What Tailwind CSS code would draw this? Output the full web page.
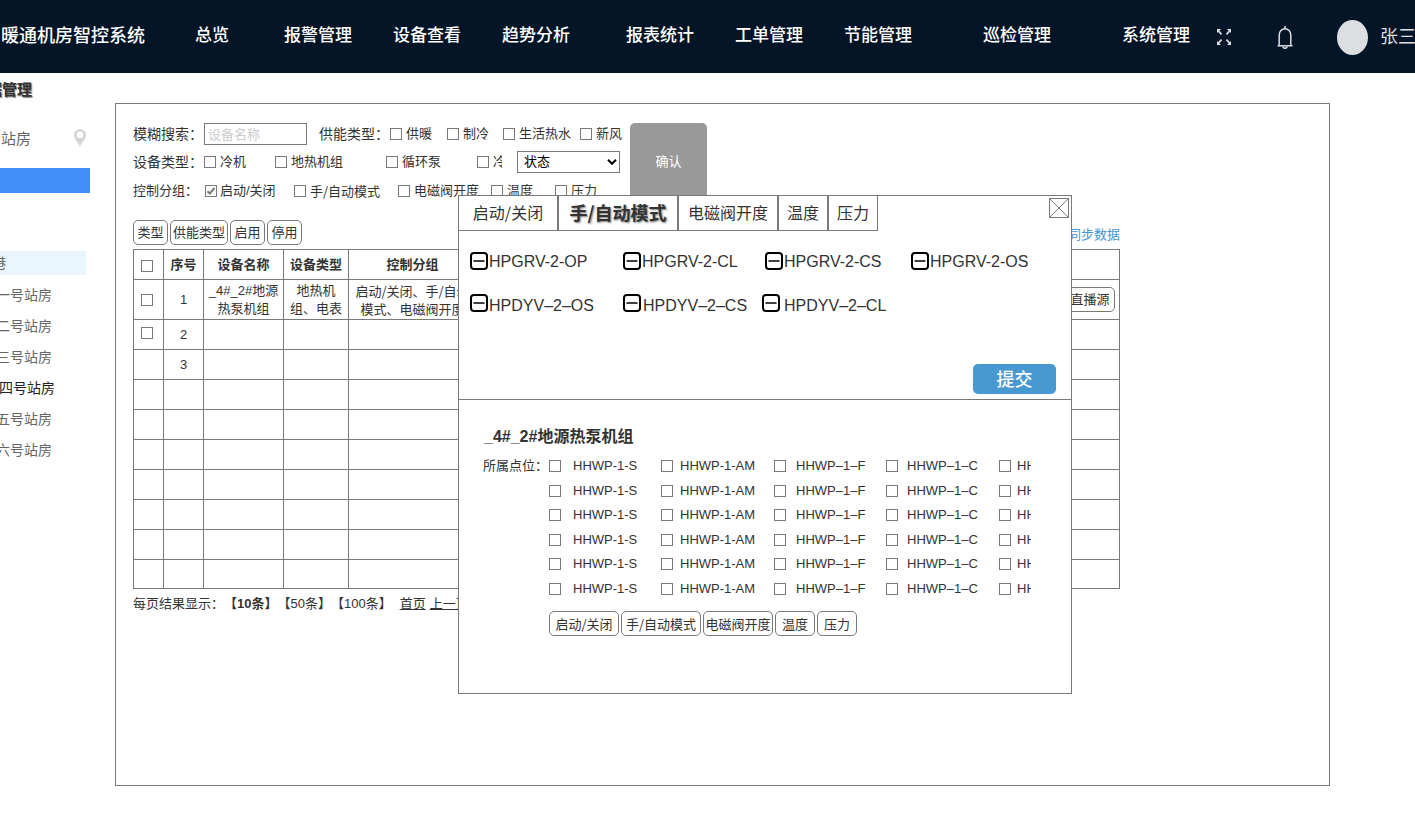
<!DOCTYPE html>
<html lang="zh-CN">
<head>
<meta charset="utf-8">
<meta name="viewport" content="width=device-width, initial-scale=1">
<title>暖通机房智控系统</title>
<script src="https://cdn.jsdelivr.net/npm/@tailwindcss/browser@4"></script>
</head>
<body class="relative min-h-screen overflow-x-hidden bg-white font-['Liberation_Sans','Noto_Sans_CJK_SC',sans-serif] text-[13px] leading-[18px] text-[#333333] [text-spacing-trim:space-all]">

<header class="flex h-[73px] items-center overflow-hidden bg-[#041527] pb-0.5 whitespace-nowrap text-white">
  <h1 class="mr-[50px] w-[145px] shrink-0 pl-px text-lg font-medium">暖通机房智控系统</h1>
  <nav class="flex shrink-0 text-[17px] leading-6 font-medium" aria-label="主导航">
    <a href="#" class="mr-[55px]">总览</a>
    <a href="#" class="mr-[41px]">报警管理</a>
    <a href="#" class="mr-[41px]">设备查看</a>
    <a href="#" class="mr-[56px]">趋势分析</a>
    <a href="#" class="mr-[41px]">报表统计</a>
    <a href="#" class="mr-[41px]">工单管理</a>
    <a href="#" class="mr-[71px]">节能管理</a>
    <a href="#" class="mr-[71px]">巡检管理</a>
    <a href="#" class="mr-[26px]">系统管理</a>
  </nav>
  <div class="flex shrink-0 items-center pt-[3px]">
    <button type="button" aria-label="全屏" class="mr-[45px]">
      <svg class="h-[18px] w-4" viewBox="0 0 16 18" fill="none" stroke="#dcdee2" stroke-width="1.800"><path d="M2 2.500l3.500 3.800M14 2.500l-3.500 3.800M2 15.500l3.500-3.800M14 15.500l-3.500-3.800"/><path fill="#dcdee2" stroke="none" d="M1 1h4L1 5zM15 1h-4l4 4zM1 17h4l-4-4zM15 17h-4l4-4z"/></svg>
    </button>
    <button type="button" aria-label="通知" class="mr-[44px]">
      <svg class="h-[23px] w-4" viewBox="0 0 16 23" fill="none" stroke="#dcdee2" stroke-width="1.500"><path d="M8 0v3"/><path d="M2.200 19.500V9a5.800 6.300 0 0 1 11.600 0v10.500"/><path d="M.5 19.800h15"/><path d="M6 20.500a2 1.700 0 0 0 4 0"/></svg>
    </button>
    <span class="mr-3 h-[35px] w-[31px] rounded-[50%] bg-[#dcdee2]"></span>
    <span class="text-lg text-[#dcdee2]">张三</span>
  </div>
</header>

<div class="flex">
  <aside class="w-[115px] shrink-0 overflow-hidden whitespace-nowrap text-sm text-[#666666]">
    <h2 class="-ml-[13px] mt-1.5 text-[15px] font-bold text-[#333333] [text-shadow:1px_1px_1px_#777777]">据管理</h2>
    <div class="mt-[27px] flex h-[22px] items-center justify-between pr-[29px] pl-px">
      <span class="text-[15px]">站房</span>
      <svg class="h-5 w-3" viewBox="0 0 12 20"><path fill="#d5d5d5" fill-rule="evenodd" d="M6 1a6 6 0 0 1 6 6c0 4-4 7-6 12C4 14 0 11 0 7a6 6 0 0 1 6-6zm0 2.600a3.300 3.300 0 1 0 0 6.600 3.300 3.300 0 0 0 0-6.600z"/></svg>
    </div>
    <div class="mt-[19px] mr-[25px] h-[25px] bg-[#438ef7]"></div>
    <div class="mt-[58px] mr-[29px] h-6 bg-[#eaf6fe]"><span class="-ml-2 inline-block leading-6">港</span></div>
    <ul class="-ml-1 mt-[5px] leading-[31px]">
      <li><a href="#">一号站房</a></li>
      <li><a href="#">二号站房</a></li>
      <li><a href="#">三号站房</a></li>
      <li class="pl-[3px] text-[#222222]"><a href="#">四号站房</a></li>
      <li><a href="#">五号站房</a></li>
      <li><a href="#">六号站房</a></li>
    </ul>
  </aside>

  <main class="mt-[30px] mr-[85px] min-h-[683px] min-w-0 grow border border-[#797979] pt-[19px] pr-[209px] pl-[17px]">
    <form class="flex items-start gap-2.5 whitespace-nowrap">
      <div class="flex w-[487px] flex-col gap-1.5">
        <div class="flex h-[22px] items-center [&>*]:shrink-0">
          <label for="q" class="w-[71px] text-sm">模糊搜索：</label>
          <input id="q" type="text" placeholder="设备名称" class="mr-3 h-[22px] w-[103px] border border-[#797979] px-[3px] placeholder:text-[#cccccc]">
          <span class="w-[71px] text-sm">供能类型：</span>
          <label class="flex w-[57px] items-center gap-1"><input type="checkbox" class="size-3 appearance-none border border-[#797979]">供暖</label>
          <label class="flex w-14 items-center gap-1"><input type="checkbox" class="size-3 appearance-none border border-[#797979]">制冷</label>
          <label class="flex w-[77px] items-center gap-1"><input type="checkbox" class="size-3 appearance-none border border-[#797979]">生活热水</label>
          <label class="flex items-center gap-1"><input type="checkbox" class="size-3 appearance-none border border-[#797979]">新风</label>
        </div>
        <div class="flex h-[22px] items-center">
          <span class="w-[71px] text-sm">设备类型：</span>
          <label class="flex w-[71px] items-center gap-1"><input type="checkbox" class="size-3 appearance-none border border-[#797979]">冷机</label>
          <label class="flex w-[111px] items-center gap-1"><input type="checkbox" class="size-3 appearance-none border border-[#797979]">地热机组</label>
          <label class="flex w-[91px] items-center gap-1"><input type="checkbox" class="size-3 appearance-none border border-[#797979]">循环泵</label>
          <label class="mr-[15px] flex w-[25px] items-center gap-1 overflow-hidden"><input type="checkbox" class="size-3 shrink-0 appearance-none border border-[#797979]">冷</label>
          <div class="grid w-[103px] items-center">
            <select aria-label="状态" class="col-start-1 row-start-1 h-[22px] appearance-none border border-[#797979] bg-white px-1.5 text-black"><option>状态</option></select>
            <svg class="pointer-events-none col-start-1 row-start-1 mr-[3px] h-2 w-2.5 justify-self-end" viewBox="0 0 10 8" fill="none" stroke="#000000" stroke-width="2"><path d="M1 1.800l4 4 4-4"/></svg>
          </div>
        </div>
        <div class="flex h-6 items-center">
          <span class="w-[72px]">控制分组：</span>
          <label class="flex w-[89px] items-center gap-[3px]"><span class="grid"><input type="checkbox" checked class="col-start-1 row-start-1 size-3 appearance-none border border-[#797979]"><svg class="pointer-events-none col-start-1 row-start-1 size-3" viewBox="0 0 12 12" fill="none" stroke="#777777" stroke-width="2"><path d="M2.500 6.300l2.300 2.200L9.500 2.800"/></svg></span>启动/关闭</label>
          <label class="flex w-[104px] items-center gap-1 font-['Noto_Sans_CJK_SC',sans-serif]"><input type="checkbox" class="size-3 appearance-none border border-[#797979]">手/自动模式</label>
          <label class="flex w-[93px] items-center gap-1"><input type="checkbox" class="size-3 appearance-none border border-[#797979]">电磁阀开度</label>
          <label class="flex w-16 items-center gap-1"><input type="checkbox" class="size-3 appearance-none border border-[#797979]">温度</label>
          <label class="flex items-center gap-1"><input type="checkbox" class="size-3 appearance-none border border-[#797979]">压力</label>
        </div>
      </div>
      <button type="button" class="h-[78px] w-[77px] rounded-[5px] bg-[#999999] text-white">确认</button>
    </form>

    <div class="mt-[17px] flex items-center gap-0.5 whitespace-nowrap">
      <button type="button" class="h-[25px] w-[35px] rounded-[5px] border border-[#797979]">类型</button>
      <button type="button" class="h-[25px] w-[58px] rounded-[5px] border border-[#797979]">供能类型</button>
      <button type="button" class="h-[25px] w-[35px] rounded-[5px] border border-[#797979]">启用</button>
      <button type="button" class="h-[25px] w-[35px] rounded-[5px] border border-[#797979]">停用</button>
      <a href="#" class="ml-auto pt-1 text-[#4496d1]">同步数据</a>
    </div>

    <table class="mt-1 w-full table-fixed border-collapse text-center [&_td]:border [&_td]:border-[#797979] [&_td]:p-0 [&_th]:border [&_th]:border-[#797979] [&_th]:p-0">
      <colgroup><col class="w-[30px]"><col class="w-10"><col class="w-20"><col class="w-[65px]"><col class="w-32"><col></colgroup>
      <thead>
        <tr class="h-[30px]">
          <th><input type="checkbox" aria-label="全选" class="mt-2 ml-[-3px] size-3 appearance-none border border-[#797979]"></th>
          <th>序号</th><th>设备名称</th><th>设备类型</th><th>控制分组</th><th></th>
        </tr>
      </thead>
      <tbody id="rows">
        <tr class="h-10">
          <td><input type="checkbox" aria-label="选择第1行" class="mt-1.5 ml-[-3px] size-3 appearance-none border border-[#797979]"></td>
          <td>1</td><td>_4#_2#地源<br>热泵机组</td><td>地热机<br>组、电表</td>
          <td class="font-['Noto_Sans_CJK_SC',sans-serif]">启动/关闭、手/自动<br>模式、电磁阀开度</td>
          <td class="text-right"><button type="button" class="mr-1 h-[25px] w-[50px] rounded-[5px] border border-[#797979]">直播源</button></td>
        </tr>
        <tr class="h-[30px]">
          <td><input type="checkbox" aria-label="选择第2行" class="ml-[-3px] size-3 appearance-none border border-[#797979]"></td>
          <td>2</td><td></td><td></td><td></td><td></td>
        </tr>
        <tr class="h-[30px]"><td></td><td>3</td><td></td><td></td><td></td><td></td></tr>
      </tbody>
    </table>

    <div class="mt-[5px] flex items-center whitespace-nowrap leading-5">
      <span>每页结果显示：</span><button type="button" class="font-bold">【10条】</button><button type="button">【50条】</button><button type="button" class="mr-2">【100条】</button>
      <a href="#" class="mr-1 underline">首页</a><a href="#" class="underline">上一页</a>
    </div>
  </main>
</div>

<section role="dialog" aria-label="控制分组设置" class="absolute top-[195px] left-[458px] flex min-h-[499px] w-[614px] flex-col border border-[#797979] bg-white">
  <div class="-mt-px -ml-px flex items-start whitespace-nowrap text-base font-['Noto_Sans_CJK_SC',sans-serif]" role="tablist">
    <button type="button" role="tab" class="h-9 w-[100px] border border-[#797979] pb-0.5">启动/关闭</button>
    <button type="button" role="tab" aria-selected="true" class="h-9 w-[120px] border border-[#797979] pb-0.5 text-lg font-bold [text-shadow:1px_1px_2px_#777777]">手/自动模式</button>
    <button type="button" role="tab" class="h-9 w-[100px] border border-[#797979] pb-0.5">电磁阀开度</button>
    <button type="button" role="tab" class="h-9 w-[50px] border border-[#797979] pb-0.5">温度</button>
    <button type="button" role="tab" class="h-9 w-[50px] border border-[#797979] pb-0.5">压力</button>
    <button type="button" aria-label="关闭" class="mt-[3px] mr-0.5 ml-auto">
      <svg class="size-5" viewBox="0 0 20 20" fill="none" stroke="#797979"><path d="M.5.5h19v19H.5zM.5.5l19 19M19.500.5l-19 19"/></svg>
    </button>
  </div>

  <div class="mt-5 grid grid-cols-[153px_142px_146px_1fr] pl-[11px] text-base leading-5 whitespace-nowrap" id="valves"></div>
  <div class="mt-[21px] grid grid-cols-[153px_139px_1fr] pl-[11px] text-base leading-5 whitespace-nowrap" id="pumps"></div>

  <button type="button" class="mt-12 mr-[15px] h-[30px] w-[83px] self-end rounded-[5px] bg-[#4899d2] pt-0.5 text-lg font-medium text-white">提交</button>

  <div class="mt-[5px] border-t border-[#797979] pl-6">
    <h3 class="mt-[27px] pl-px text-base leading-5 font-bold">_4#_2#地源热泵机组</h3>
    <div class="mt-[7px] flex">
      <span class="w-[66px] shrink-0 leading-6">所属点位：</span>
      <div class="grid h-[147px] w-[482px] grid-cols-[112px_113px_112px_113px_1fr] grid-rows-6 items-center overflow-hidden whitespace-nowrap" id="points"></div>
    </div>
    <div class="mt-2.5 ml-[66px] flex gap-0.5 font-['Noto_Sans_CJK_SC',sans-serif] whitespace-nowrap">
      <button type="button" class="h-[25px] w-[70px] rounded-[5px] border border-[#797979]">启动/关闭</button>
      <button type="button" class="h-[25px] w-20 rounded-[5px] border border-[#797979]">手/自动模式</button>
      <button type="button" class="h-[25px] w-[70px] rounded-[5px] border border-[#797979]">电磁阀开度</button>
      <button type="button" class="h-[25px] w-10 rounded-[5px] border border-[#797979]">温度</button>
      <button type="button" class="h-[25px] w-10 rounded-[5px] border border-[#797979]">压力</button>
    </div>
  </div>
</section>

<script>
  // Empty rows that fill up the page of results
  document.getElementById('rows').insertAdjacentHTML('beforeend',
    '<tr class="h-[30px]"><td></td><td></td><td></td><td></td><td></td><td></td></tr>'.repeat(6) +
    '<tr class="h-[29px]"><td></td><td></td><td></td><td></td><td></td><td></td></tr>');

  // Points already in the group, each with its remove button
  const chip = (name, gap, pad) =>
    `<div class="flex items-start ${gap}"><button type="button" aria-label="移除 ${name}" class="mt-px"><svg class="block size-[18px]" viewBox="0 0 18 18" fill="none" stroke="#000000" stroke-width="2"><rect x="1" y="1" width="16" height="16" rx="3"/><path stroke-width="1.500" d="M3.500 9h11"/></svg></button><span class="${pad}">${name}</span></div>`;
  document.getElementById('valves').innerHTML =
    ['HPGRV-2-OP', 'HPGRV-2-CL', 'HPGRV-2-CS', 'HPGRV-2-OS'].map(name => chip(name, 'gap-px', 'pt-px')).join('');
  document.getElementById('pumps').innerHTML =
    chip('HPDYV–2–OS', 'gap-px', 'pt-[3px]') + chip('HPDYV–2–CS', 'gap-0.5', 'pt-[3px]') + chip('HPDYV–2–CL', 'gap-1', 'pt-[3px]');

  // Points of the selected unit
  const row = [['HHWP-1-S', 'gap-3'], ['HHWP-1-AM', 'gap-[7px]'], ['HHWP–1–F', 'gap-2.5'], ['HHWP–1–C', 'gap-[9px]'], ['HHWP–1–S', 'gap-1.5']].map(([name, gap]) =>
    `<label class="flex items-center ${gap}"><input type="checkbox" class="size-3 shrink-0 appearance-none border border-[#797979]">${name}</label>`).join('');
  document.getElementById('points').innerHTML = row.repeat(6);
</script>
</body>
</html>
